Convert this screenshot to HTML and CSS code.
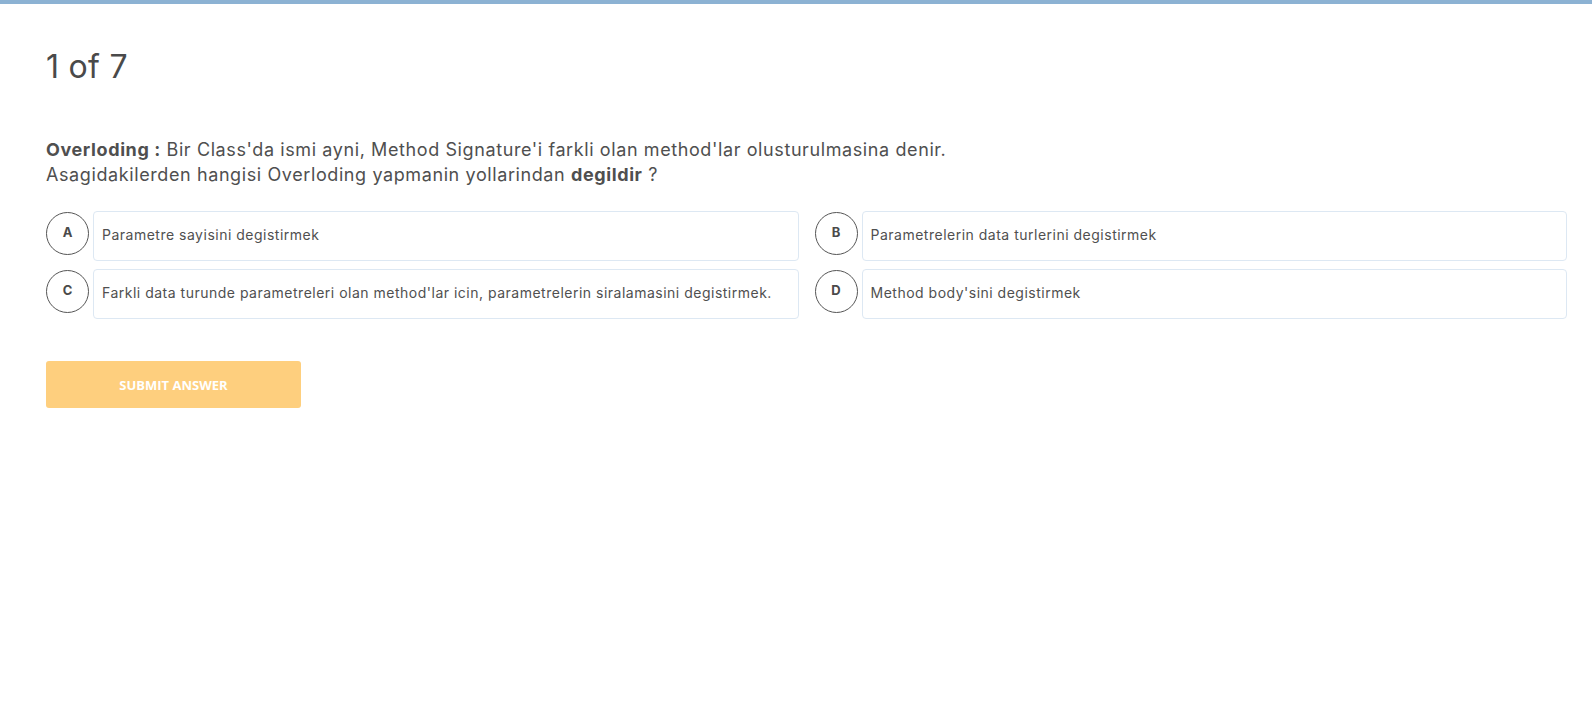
FILE: index.html
```html
<!DOCTYPE html>
<html lang="tr">
<head>
<meta charset="utf-8">
<title>Quiz</title>
<link rel="stylesheet" href="styles.css">
</head>
<body>
<div class="topbar"></div>
<main class="quiz">
  <h1 class="counter">1 of 7</h1>
  <p class="question"><strong>Overloding :</strong> Bir Class'da ismi ayni, Method Signature'i farkli olan method'lar olusturulmasina denir.<br>Asagidakilerden hangisi Overloding yapmanin yollarindan <strong>degildir</strong> ?</p>
  <div class="options">
    <div class="option"><span class="letter">A</span><div class="card">Parametre sayisini degistirmek</div></div>
    <div class="option"><span class="letter">B</span><div class="card">Parametrelerin data turlerini degistirmek</div></div>
    <div class="option"><span class="letter">C</span><div class="card">Farkli data turunde parametreleri olan method'lar icin, parametrelerin siralamasini degistirmek.</div></div>
    <div class="option"><span class="letter">D</span><div class="card">Method body'sini degistirmek</div></div>
  </div>
  <button class="submit">SUBMIT ANSWER</button>
</main>
</body>
</html>
```
FILE: styles.css
```css
* { box-sizing: border-box; }
html, body { margin: 0; padding: 0; background: #fff; }
body { font-family: Inter, "Noto Sans", sans-serif; color: #4f4f4f; }
.topbar { height: 4px; background: #8cb2d3; }
.quiz { padding: 43px 25px 0 46px; }
.counter { margin: 0; font-size: 32px; font-weight: 400; line-height: 40px; color: #4a4a4a; letter-spacing: 0.3px; }
.question { margin: 50px 0 0; font-size: 18px; line-height: 25px; color: #4f4f4f; letter-spacing: 0.6px; }
.question strong { font-weight: 700; }
.options { margin-top: 24px; display: grid; grid-template-columns: 1fr 1fr; column-gap: 16px; row-gap: 8px; }
.option { display: flex; gap: 4px; align-items: flex-start; }
.letter { flex: 0 0 43px; height: 43px; margin-top: 1px; border: 1px solid #555; border-radius: 50%; display: flex; align-items: center; justify-content: center; font-size: 13px; font-weight: 700; color: #4a4a4a; padding-bottom: 4px; }
.card { flex: 1; height: 50px; border: 1px solid #dde8f3; border-radius: 4px; padding: 0 8px; display: flex; align-items: center; font-size: 14px; color: #505050; padding-bottom: 3px; letter-spacing: 0.5px; }
.submit { margin-top: 42px; width: 255px; height: 47px; border: 0; border-radius: 3px; background: #fecf7e; color: #fff; font-family: "Open Sans", sans-serif; font-weight: 700; font-size: 13px; }
```
